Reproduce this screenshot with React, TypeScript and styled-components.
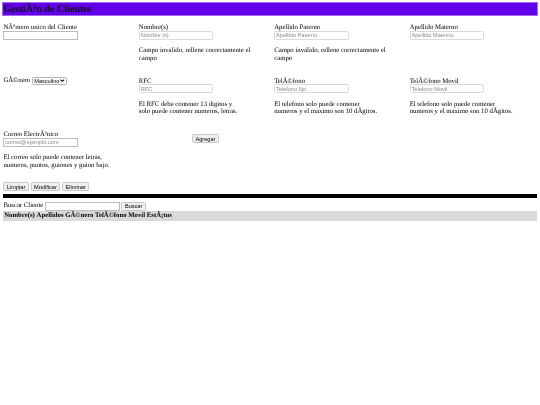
import React from 'react';
import styled, { createGlobalStyle } from 'styled-components';

const GlobalStyle = createGlobalStyle`
  body {
    margin: 0;
    background: #fff;
  }
`;

// the page was designed for a 1280 wide window, 540 is that at 0.421875
const Page = styled.div`
  zoom: 0.421875;
  padding: 8px;
  color: #000;
  font-family: "Liberation Serif", serif;
  font-size: 16px;
  line-height: 18px;
  text-rendering: geometricPrecision;
  filter: blur(0.7px);
`;

const Title = styled.h2`
  margin: 0 0 20px;
  height: 27px;
  box-sizing: border-box;
  background: #6200ea;
  outline: 1px solid #a468f2;
  font-size: 24px;
  line-height: 31px;
  font-weight: bold;
  color: #111;
`;

const FormGrid = styled.div`
  display: grid;
  grid-template-columns: 321px 321px 321px 1fr;
  grid-auto-rows: 127px;
`;

const Field = styled.div`
  display: flex;
  flex-direction: column;
  align-items: flex-start;
`;

const InlineField = styled.div`
  display: flex;
  align-items: center;
  align-self: start;
  gap: 4px;
  height: 18px;
  line-height: 22px;
`;

const Label = styled.label`
  display: block;
  height: 18px;
  line-height: 23px;
`;

const Input = styled.input<{ $rounded?: boolean }>`
  width: 177px;
  height: 21px;
  padding: 1px 2px;
  box-sizing: border-box;
  border: ${(p) => (p.$rounded ? '2px solid #dadada' : '1px solid #bcbcbc')};
  border-radius: ${(p) => (p.$rounded ? '4px' : '0')};
  outline: none;
  font-family: "Liberation Sans", sans-serif;
  font-size: 13.33px;
  background: #fff;

  &::placeholder {
    color: #8a8a8a;
  }
`;

const SelectWrap = styled.span`
  position: relative;
  display: inline-flex;
  width: 82px;
  height: 19px;
`;

const Select = styled.select`
  width: 100%;
  padding: 0 0 0 3px;
  appearance: none;
  border: 1px solid #b4b4b4;
  border-radius: 3px;
  background: #fff;
  color: #000;
  font-family: "Liberation Sans", sans-serif;
  font-size: 13.33px;
`;

const Chevron = styled.svg`
  position: absolute;
  top: 6px;
  right: 4px;
  width: 11px;
  height: 7px;
  pointer-events: none;
`;

const Hint = styled.p`
  margin: 18px 0 0;
  width: 300px;
`;

const Button = styled.button`
  padding: 1px 6px;
  height: 21px;
  border: 1px solid #c8c8c8;
  border-radius: 3px;
  background: #efefef;
  color: #000;
  font-family: "Liberation Sans", sans-serif;
  font-size: 13.33px;
`;

const AddCell = styled.div`
  padding: 9px 0 0 126px;
`;

const Actions = styled.div`
  display: flex;
  gap: 4px;
  margin-top: -4px;
`;

const Divider = styled.hr`
  margin: 8px 0 0;
  height: 8px;
  border: 0;
  background: #000;
`;

const SearchRow = styled.div`
  display: flex;
  align-items: center;
  gap: 4px;
  height: 21px;
  margin-top: 9px;
`;

const TableHead = styled.div`
  display: flex;
  gap: 4px;
  height: 24px;
  padding-left: 2px;
  align-items: center;
  background: #d9d9d9;
  font-weight: bold;
`;

const fields = [
  { label: 'Nombre(s)', placeholder: 'Nombre (s)', hint: 'Campo invalido, rellene correctamente el campo' },
  { label: 'Apellido Paterno', placeholder: 'Apellido Paterno', hint: 'Campo invalido, rellene correctamente el campo' },
  { label: 'Apellido Materno', placeholder: 'Apellido Materno' },
];

const contactFields = [
  { label: 'RFC', placeholder: 'RFC', hint: ['El RFC debe contener 13 digitos y', 'solo puede contener numeros, letras.'] },
  { label: 'TelÃ©fono', placeholder: 'Telefono fijo', hint: ['El telefono solo puede contener', 'numeros y el maximo son 10 dÃ­gitos.'] },
  { label: 'TelÃ©fono Movil', placeholder: 'Telefono Movil', hint: ['El telefono solo puede contener', 'numeros y el maximo son 10 dÃ­gitos.'] },
];

const columns = ['Nombre(s)', 'Apellidos', 'GÃ©nero', 'TelÃ©fono', 'Movil', 'EstÃ¡tus'];

export default function App() {
  return (
    <Page>
      <GlobalStyle />
      <Title>GestiÃ³n de Clientes</Title>

      <FormGrid>
        <Field>
          <Label>NÃºmero unico del Cliente</Label>
          <Input />
        </Field>
        {fields.map((f) => (
          <Field key={f.label}>
            <Label>{f.label}</Label>
            <Input $rounded placeholder={f.placeholder} />
            {f.hint && <Hint>{f.hint}</Hint>}
          </Field>
        ))}

        <InlineField>
          <span>GÃ©nero</span>
          <SelectWrap>
            <Select defaultValue="m">
              <option value="m">Masculino</option>
            </Select>
            <Chevron viewBox="0 0 11 7">
              <path d="M1 1.5l4.5 4 4.5-4" fill="none" stroke="#000" strokeWidth="2.4" />
            </Chevron>
          </SelectWrap>
        </InlineField>
        {contactFields.map((f) => (
          <Field key={f.label}>
            <Label>{f.label}</Label>
            <Input $rounded placeholder={f.placeholder} />
            <Hint>
              {f.hint[0]}
              <br />
              {f.hint[1]}
            </Hint>
          </Field>
        ))}

        <Field>
          <Label>Correo ElectrÃ³nico</Label>
          <Input placeholder="correo@ejemplo.com" />
          <Hint>
            El correo solo puede contener letras,
            <br />
            numeros, puntos, guiones y guion bajo.
          </Hint>
        </Field>
        <AddCell>
          <Button>Agregar</Button>
        </AddCell>
      </FormGrid>

      <Actions>
        <Button>Limpiar</Button>
        <Button>Modificar</Button>
        <Button>Eliminar</Button>
      </Actions>

      <Divider />

      <SearchRow>
        <span>Buscar Cliente</span>
        <Input />
        <Button>Buscar</Button>
      </SearchRow>

      <TableHead>
        {columns.map((c) => (
          <span key={c}>{c}</span>
        ))}
      </TableHead>
    </Page>
  );
}
